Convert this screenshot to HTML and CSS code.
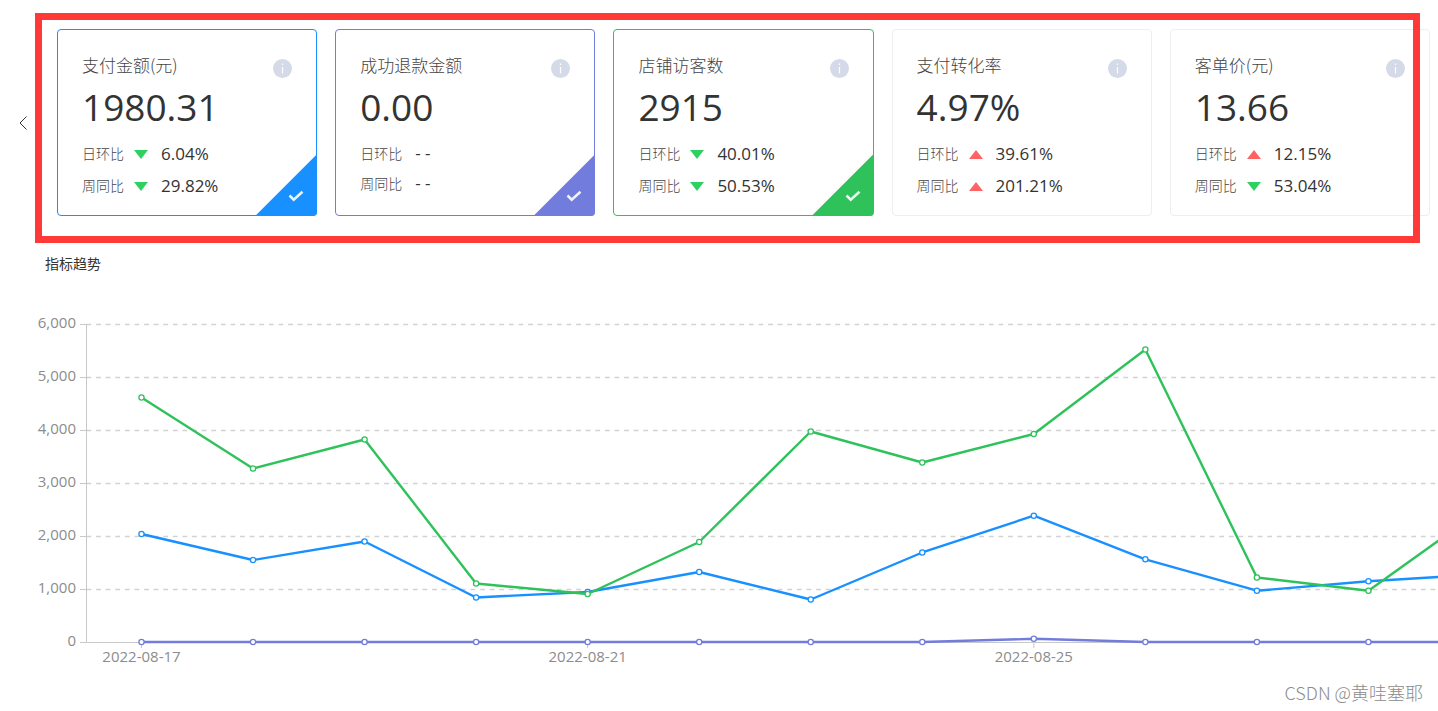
FILE: index.html
```html
<!DOCTYPE html>
<html lang="zh-CN">
<head>
<meta charset="utf-8">
<title>指标趋势</title>
<link rel="stylesheet" href="styles.css">
</head>
<body>
<svg class="defs" aria-hidden="true">
  <symbol id="info" viewBox="0 0 19 19"><circle cx="9.5" cy="9.5" r="9.5" fill="#d4dae7"/><path d="M9.5 8v6.500M9.500 4.500v1.500" stroke="#fff" stroke-width="1.200"/></symbol>
  <symbol id="tick" viewBox="0 0 16 12"><path d="M1.500 5.500l4.200 4.200L14.500 1.800" fill="none" stroke="#fff" stroke-opacity=".9" stroke-width="2.500"/></symbol>
  <symbol id="down" viewBox="0 0 14 9"><path d="M0 0h14L7 9z" fill="#2fd062"/></symbol>
  <symbol id="up" viewBox="0 0 14 9"><path d="M0 9h14L7 0z" fill="#ff6262"/></symbol>
</svg>

<section class="strip">
  <button class="prev" type="button" aria-label="上一组"><svg class="prev-icon" viewBox="0 0 8 14"><path d="M7.500 .5L1 7l6.500 6.500" fill="none" stroke="#333"/></svg></button>
  <div class="cards">
    <article class="card blue">
      <header class="card-head"><label for="m1">支付金额(元)</label><button class="info" type="button" aria-label="说明"><svg><use href="#info"/></svg></button></header>
      <p class="value">1980.31</p>
      <p class="row"><span class="label">日环比</span><svg class="arrow"><use href="#down"/></svg><span class="rate">6.04%</span></p>
      <p class="row"><span class="label">周同比</span><svg class="arrow"><use href="#down"/></svg><span class="rate">29.82%</span></p>
      <input class="corner" id="m1" type="checkbox" checked><svg class="tick"><use href="#tick"/></svg>
    </article>
    <article class="card purple">
      <header class="card-head"><label for="m2">成功退款金额</label><button class="info" type="button" aria-label="说明"><svg><use href="#info"/></svg></button></header>
      <p class="value">0.00</p>
      <p class="row empty"><span class="label">日环比</span><span class="rate">- -</span></p>
      <p class="row empty"><span class="label">周同比</span><span class="rate">- -</span></p>
      <input class="corner" id="m2" type="checkbox" checked><svg class="tick"><use href="#tick"/></svg>
    </article>
    <article class="card green">
      <header class="card-head"><label for="m3">店铺访客数</label><button class="info" type="button" aria-label="说明"><svg><use href="#info"/></svg></button></header>
      <p class="value">2915</p>
      <p class="row"><span class="label">日环比</span><svg class="arrow"><use href="#down"/></svg><span class="rate">40.01%</span></p>
      <p class="row"><span class="label">周同比</span><svg class="arrow"><use href="#down"/></svg><span class="rate">50.53%</span></p>
      <input class="corner" id="m3" type="checkbox" checked><svg class="tick"><use href="#tick"/></svg>
    </article>
    <article class="card">
      <header class="card-head"><span>支付转化率</span><button class="info" type="button" aria-label="说明"><svg><use href="#info"/></svg></button></header>
      <p class="value">4.97%</p>
      <p class="row"><span class="label">日环比</span><svg class="arrow"><use href="#up"/></svg><span class="rate">39.61%</span></p>
      <p class="row"><span class="label">周同比</span><svg class="arrow"><use href="#up"/></svg><span class="rate">201.21%</span></p>
    </article>
    <article class="card">
      <header class="card-head"><span>客单价(元)</span><button class="info" type="button" aria-label="说明"><svg><use href="#info"/></svg></button></header>
      <p class="value">13.66</p>
      <p class="row"><span class="label">日环比</span><svg class="arrow"><use href="#up"/></svg><span class="rate">12.15%</span></p>
      <p class="row"><span class="label">周同比</span><svg class="arrow"><use href="#down"/></svg><span class="rate">53.04%</span></p>
    </article>
  </div>
  <div class="highlight"></div>
</section>

<section class="trend">
  <h2 class="trend-title">指标趋势</h2>
  <svg class="chart" id="chart" role="img" aria-label="指标趋势"></svg>
</section>
<footer class="mark">CSDN @黄哇塞耶</footer>
<script src="chart.js"></script>
</body>
</html>
```

FILE: styles.css
```css
* { box-sizing: border-box; }

body {
  margin: 0;
  background: #fff;
  color: #333;
  font-family: "Open Sans", "Noto Sans CJK SC", sans-serif;
  overflow-x: hidden;
}

p, h2 { margin: 0; font-weight: 400; }

button { padding: 0; border: 0; background: none; cursor: pointer; }

.defs { display: none; }

/* metric cards */
.strip {
  position: relative;
  display: flex;
  padding: 29px 8px 27px 0;
}

.prev {
  flex: 0 0 57px;
  display: flex;
  align-items: center;
  padding-left: 19px;
}

.prev-icon { width: 8px; height: 14px; }

.cards {
  flex: 1;
  display: grid;
  grid-template-columns: repeat(5, 1fr);
  gap: 18px;
}

.card {
  position: relative;
  padding: 24px 24px 13px;
  border: 1px solid #eee;
  border-radius: 4px;
}

.blue { --accent: #1890ff; border-color: #1890ff; }
.purple { --accent: #727cdd; border-color: #727cdd; }
.green { --accent: #2fc25b; border-color: #2fc25b; }

.card-head {
  display: flex;
  justify-content: space-between;
  height: 24px;
  font-family: "Noto Sans CJK SC", sans-serif;
  font-size: 17px;
  font-weight: 300;
  line-height: 22px;
  color: #444;
}

.info { align-self: flex-end; }
.info, .info svg { display: block; width: 19px; height: 19px; }

.value {
  margin: 3px 0 5px;
  font-size: 37px;
  line-height: 52px;
}

.row {
  display: flex;
  align-items: center;
  height: 32px;
}

.row.empty { height: 30px; gap: 13px; }

.label {
  padding-bottom: 2px;
  font-family: "Noto Sans CJK SC", sans-serif;
  font-size: 14px;
  font-weight: 300;
  color: #444;
}

.empty .label { padding-bottom: 0; }

.arrow { width: 14px; height: 9px; margin: 0 13px 0 10px; }

.rate { padding-bottom: 2px; font-size: 17px; }

.corner {
  position: absolute;
  right: -1px;
  bottom: -1px;
  width: 62px;
  height: 62px;
  margin: 0;
  appearance: none;
  background: var(--accent);
  border-radius: 0 0 4px 0;
  clip-path: polygon(100% 0, 100% 100%, 0 100%);
}

.tick {
  position: absolute;
  right: 12px;
  bottom: 13px;
  width: 16px;
  height: 12px;
  pointer-events: none;
}

.highlight {
  position: absolute;
  inset: 13px 18px 0 35px;
  border: 7px solid #ff3838;
  pointer-events: none;
}

/* trend chart */
.trend-title {
  padding-left: 45px;
  font-size: 14px;
  line-height: 42px;
}

.chart { display: block; width: 100%; height: 389px; overflow: hidden; }
.chart text { font-size: 15px; fill: #8c8c8c; }
.grid { stroke: #d2d2d2; stroke-width: 1.4; stroke-dasharray: 4.8 4.8; }
.axis { stroke: #c8c8c8; }
.series { fill: none; stroke-width: 2.4; stroke-linejoin: round; }
.point { fill: #fff; stroke-width: 1.3; }

.mark {
  padding-right: 15px;
  font-family: "Noto Sans CJK SC", sans-serif;
  font-size: 18px;
  font-weight: 300;
  line-height: 36px;
  text-align: right;
  color: #8c8c8c;
}
```

FILE: chart.js
```js
const chart = document.getElementById("chart");
const BASE = 357, LEFT = 86.5, FIRST = 141.5, STEP = 111.54;
const y = v => BASE - v * 0.053;

function add(tag, attrs, text) {
  const el = document.createElementNS("http://www.w3.org/2000/svg", tag);
  for (const k in attrs) el.setAttribute(k, attrs[k]);
  if (text) el.textContent = text;
  chart.appendChild(el);
}

for (let v = 0; v <= 6000; v += 1000) {
  const gy = y(v) + 0.5;
  add("line", { class: v ? "grid" : "axis", x1: LEFT, x2: 2400, y1: gy, y2: gy });
  add("line", { class: "axis", x1: 80, x2: LEFT, y1: gy, y2: gy });
  add("text", { x: 76, y: gy + 3, "text-anchor": "end" }, v.toLocaleString("en-US"));
}
add("line", { class: "axis", x1: LEFT, x2: LEFT, y1: y(6000), y2: BASE });

["2022-08-17", "2022-08-21", "2022-08-25"].forEach((d, i) => {
  const x = FIRST + i * 4 * STEP;
  add("line", { class: "axis", x1: x, x2: x, y1: BASE, y2: BASE + 6 });
  add("text", { x, y: BASE + 20, "text-anchor": "middle" }, d);
});

const series = [
  ["#1890ff", [2038, 1547, 1896, 840, 943, 1321, 802, 1689, 2383, 1560, 968, 1145, 1274]],
  ["#727cdd", [0, 0, 0, 0, 0, 0, 0, 0, 60, 0, 0, 0, 0]],
  ["#2fc25b", [4613, 3274, 3821, 1104, 906, 1887, 3972, 3387, 3925, 5519, 1217, 968, 2472]]
];
for (const [color, data] of series) {
  const pts = data.map((v, i) => [FIRST + i * STEP, y(v)]);
  add("polyline", { class: "series", stroke: color, points: pts.join(" ") });
  for (const [cx, cy] of pts) add("circle", { class: "point", stroke: color, cx, cy, r: 2.6 });
}
```
